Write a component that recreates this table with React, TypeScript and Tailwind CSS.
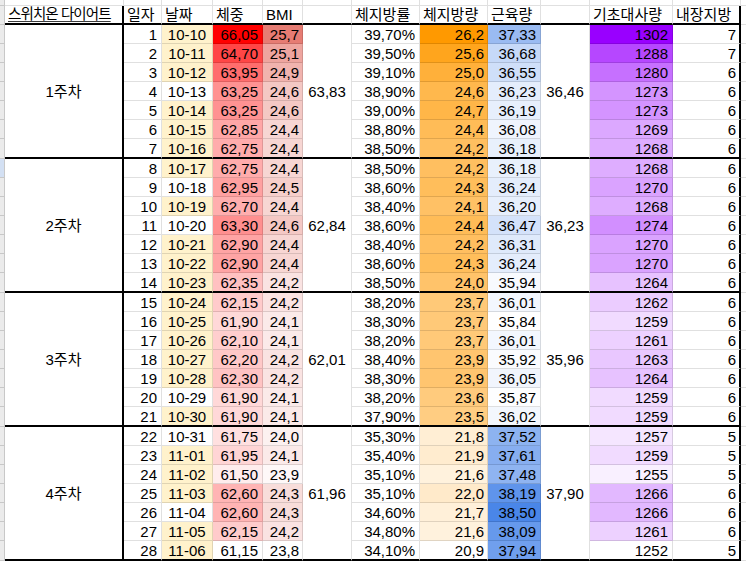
import React from "react";

type Row = [number, string, number, number, string, number, number, number, number];

const rows: Row[] = [
  [1, "10-10", 66.05, 25.7, "39,70%", 26.2, 37.33, 1302, 7],
  [2, "10-11", 64.7, 25.1, "39,50%", 25.6, 36.68, 1288, 7],
  [3, "10-12", 63.95, 24.9, "39,10%", 25.0, 36.55, 1280, 6],
  [4, "10-13", 63.25, 24.6, "38,90%", 24.6, 36.23, 1273, 6],
  [5, "10-14", 63.25, 24.6, "39,00%", 24.7, 36.19, 1273, 6],
  [6, "10-15", 62.85, 24.4, "38,80%", 24.4, 36.08, 1269, 6],
  [7, "10-16", 62.75, 24.4, "38,50%", 24.2, 36.18, 1268, 6],
  [8, "10-17", 62.75, 24.4, "38,50%", 24.2, 36.18, 1268, 6],
  [9, "10-18", 62.95, 24.5, "38,60%", 24.3, 36.24, 1270, 6],
  [10, "10-19", 62.7, 24.4, "38,40%", 24.1, 36.2, 1268, 6],
  [11, "10-20", 63.3, 24.6, "38,60%", 24.4, 36.47, 1274, 6],
  [12, "10-21", 62.9, 24.4, "38,40%", 24.2, 36.31, 1270, 6],
  [13, "10-22", 62.9, 24.4, "38,60%", 24.3, 36.24, 1270, 6],
  [14, "10-23", 62.35, 24.2, "38,50%", 24.0, 35.94, 1264, 6],
  [15, "10-24", 62.15, 24.2, "38,20%", 23.7, 36.01, 1262, 6],
  [16, "10-25", 61.9, 24.1, "38,30%", 23.7, 35.84, 1259, 6],
  [17, "10-26", 62.1, 24.1, "38,20%", 23.7, 36.01, 1261, 6],
  [18, "10-27", 62.2, 24.2, "38,40%", 23.9, 35.92, 1263, 6],
  [19, "10-28", 62.3, 24.2, "38,30%", 23.9, 36.05, 1264, 6],
  [20, "10-29", 61.9, 24.1, "38,20%", 23.6, 35.87, 1259, 6],
  [21, "10-30", 61.9, 24.1, "37,90%", 23.5, 36.02, 1259, 6],
  [22, "10-31", 61.75, 24.0, "35,30%", 21.8, 37.52, 1257, 5],
  [23, "11-01", 61.95, 24.1, "35,40%", 21.9, 37.61, 1259, 5],
  [24, "11-02", 61.5, 23.9, "35,10%", 21.6, 37.48, 1255, 5],
  [25, "11-03", 62.6, 24.3, "35,10%", 22.0, 38.19, 1266, 6],
  [26, "11-04", 62.6, 24.3, "34,60%", 21.7, 38.5, 1266, 6],
  [27, "11-05", 62.15, 24.2, "34,80%", 21.6, 38.09, 1261, 6],
  [28, "11-06", 61.15, 23.8, "34,10%", 20.9, 37.94, 1252, 5],
];

const avgW = ["63,83", "62,84", "62,01", "61,96"];
const avgM = ["36,46", "36,23", "35,96", "37,90"];
const whiteDates = new Set([4, 9, 11, 20, 22, 26]);

const fmt = (v: number, d: number) => v.toFixed(d).replace(".", ",");

function scale(v: number, min: number, max: number, c: [number, number, number]) {
  const t = Math.max(0, Math.min(1, (v - min) / (max - min)));
  const [r, g, b] = c.map((ch) => Math.round(255 - t * (255 - ch)));
  return `rgb(${r},${g},${b})`;
}

const COLS =
  "grid grid-cols-[5px_119px_38px_51px_50px_40px_49px_68px_68px_53px_49px_83px_68px_1fr]";

function Strip({ hl }: { hl?: boolean }) {
  return <div className={`border-r border-b border-[#c8c8c8] ${hl ? "bg-[#d3e0f3]" : "bg-[#ebebeb]"}`} />;
}

function TopRow() {
  const g = "border-r border-b border-black/[0.12]";
  return (
    <div className={`${COLS} h-[6px]`}>
      <Strip />
      {Array.from({ length: 12 }).map((_, i) => (
        <div key={i} className={g} />
      ))}
      <div className="border-b border-black/[0.12]" />
    </div>
  );
}

function HeaderRow() {
  const h = "flex items-center pl-[3px] whitespace-nowrap overflow-hidden border-b-2 border-b-black";
  const gr = "border-r border-r-black/[0.12]";
  return (
    <div className={`${COLS} h-[19px]`}>
      <Strip />
      <div className={`${h} border-r-2 border-r-black`}>
        <span className="text-[14.5px] tracking-[-0.9px] underline decoration-[#3a3a3a] underline-offset-[2px]">
          스위치온 다이어트
        </span>
      </div>
      <div className={`${h} ${gr}`}>일자</div>
      <div className={`${h} ${gr}`}>날짜</div>
      <div className={`${h} ${gr}`}>체중</div>
      <div className={`${h} ${gr}`}>BMI</div>
      <div className={`${h} ${gr}`}></div>
      <div className={`${h} ${gr}`}>체지방률</div>
      <div className={`${h} ${gr}`}>체지방량</div>
      <div className={`${h} ${gr}`}>근육량</div>
      <div className={`${h} ${gr}`}></div>
      <div className={`${h} ${gr}`}>기초대사량</div>
      <div className={`${h} border-r-2 border-r-black`}>내장지방</div>
      <div className="border-b border-black/[0.12]" />
    </div>
  );
}

function Week({ w }: { w: number }) {
  const wk = rows.slice(w * 7, w * 7 + 7);
  return (
    <div className={`${COLS} grid-rows-[19px_19px_19px_19px_19px_19px_20px]`}>
      {wk.map((r, i) => {
        const last = i === 6;
        const bB = last ? "border-b-2 border-b-black" : "border-b border-b-black/[0.12]";
        const base = `flex items-center whitespace-nowrap pt-[1px] border-r border-r-black/[0.12] ${bB}`;
        return (
          <React.Fragment key={i}>
            <Strip hl={w === 1 && i === 0} />
            {i === 0 && (
              <div className="row-span-7 flex items-center justify-center border-r-2 border-b-2 border-black">
                {w + 1}주차
              </div>
            )}
            <div className={`${base} justify-end pr-[4px]`}>{r[0]}</div>
            <div className={`${base} justify-center ${whiteDates.has(r[0]) ? "" : "bg-[#fff2cc]"}`}>{r[1]}</div>
            <div className={`${base} justify-end pr-[4px]`} style={{ backgroundColor: scale(r[2], 61.15, 66.05, [255, 0, 0]) }}>
              {fmt(r[2], 2)}
            </div>
            <div className={`${base} justify-end pr-[3px]`} style={{ backgroundColor: scale(r[3], 23.8, 25.7, [230, 124, 115]) }}>
              {fmt(r[3], 1)}
            </div>
            {i === 0 && (
              <div className="row-span-7 flex items-center justify-center border-r border-r-black/[0.12] border-b-2 border-b-black">
                {avgW[w]}
              </div>
            )}
            <div className={`${base} justify-end pr-[4px]`}>{r[4]}</div>
            <div className={`${base} justify-end pr-[3px]`} style={{ backgroundColor: scale(r[5], 20.9, 26.2, [255, 153, 0]) }}>
              {fmt(r[5], 1)}
            </div>
            <div className={`${base} justify-end pr-[4px]`} style={{ backgroundColor: scale(r[6], 35.84, 38.5, [74, 134, 232]) }}>
              {fmt(r[6], 2)}
            </div>
            {i === 0 && (
              <div className="row-span-7 flex items-center justify-center border-r border-r-black/[0.12] border-b-2 border-b-black">
                {avgM[w]}
              </div>
            )}
            <div className={`${base} justify-end pr-[4px]`} style={{ backgroundColor: scale(r[7], 1252, 1302, [153, 0, 255]) }}>
              {r[7]}
            </div>
            <div className={`flex items-center justify-end pr-[3px] pt-[1px] border-r-2 border-r-black ${bB}`}>{r[8]}</div>
            <div className="border-b border-black/[0.12]" />
          </React.Fragment>
        );
      })}
    </div>
  );
}

export default function App() {
  return (
    <div className="w-[746px] h-[564px] overflow-hidden bg-white text-black text-[15px] leading-none font-['Liberation_Sans','Noto_Sans_CJK_KR',sans-serif]">
      <TopRow />
      <HeaderRow />
      {[0, 1, 2, 3].map((w) => (
        <Week key={w} w={w} />
      ))}
    </div>
  );
}
